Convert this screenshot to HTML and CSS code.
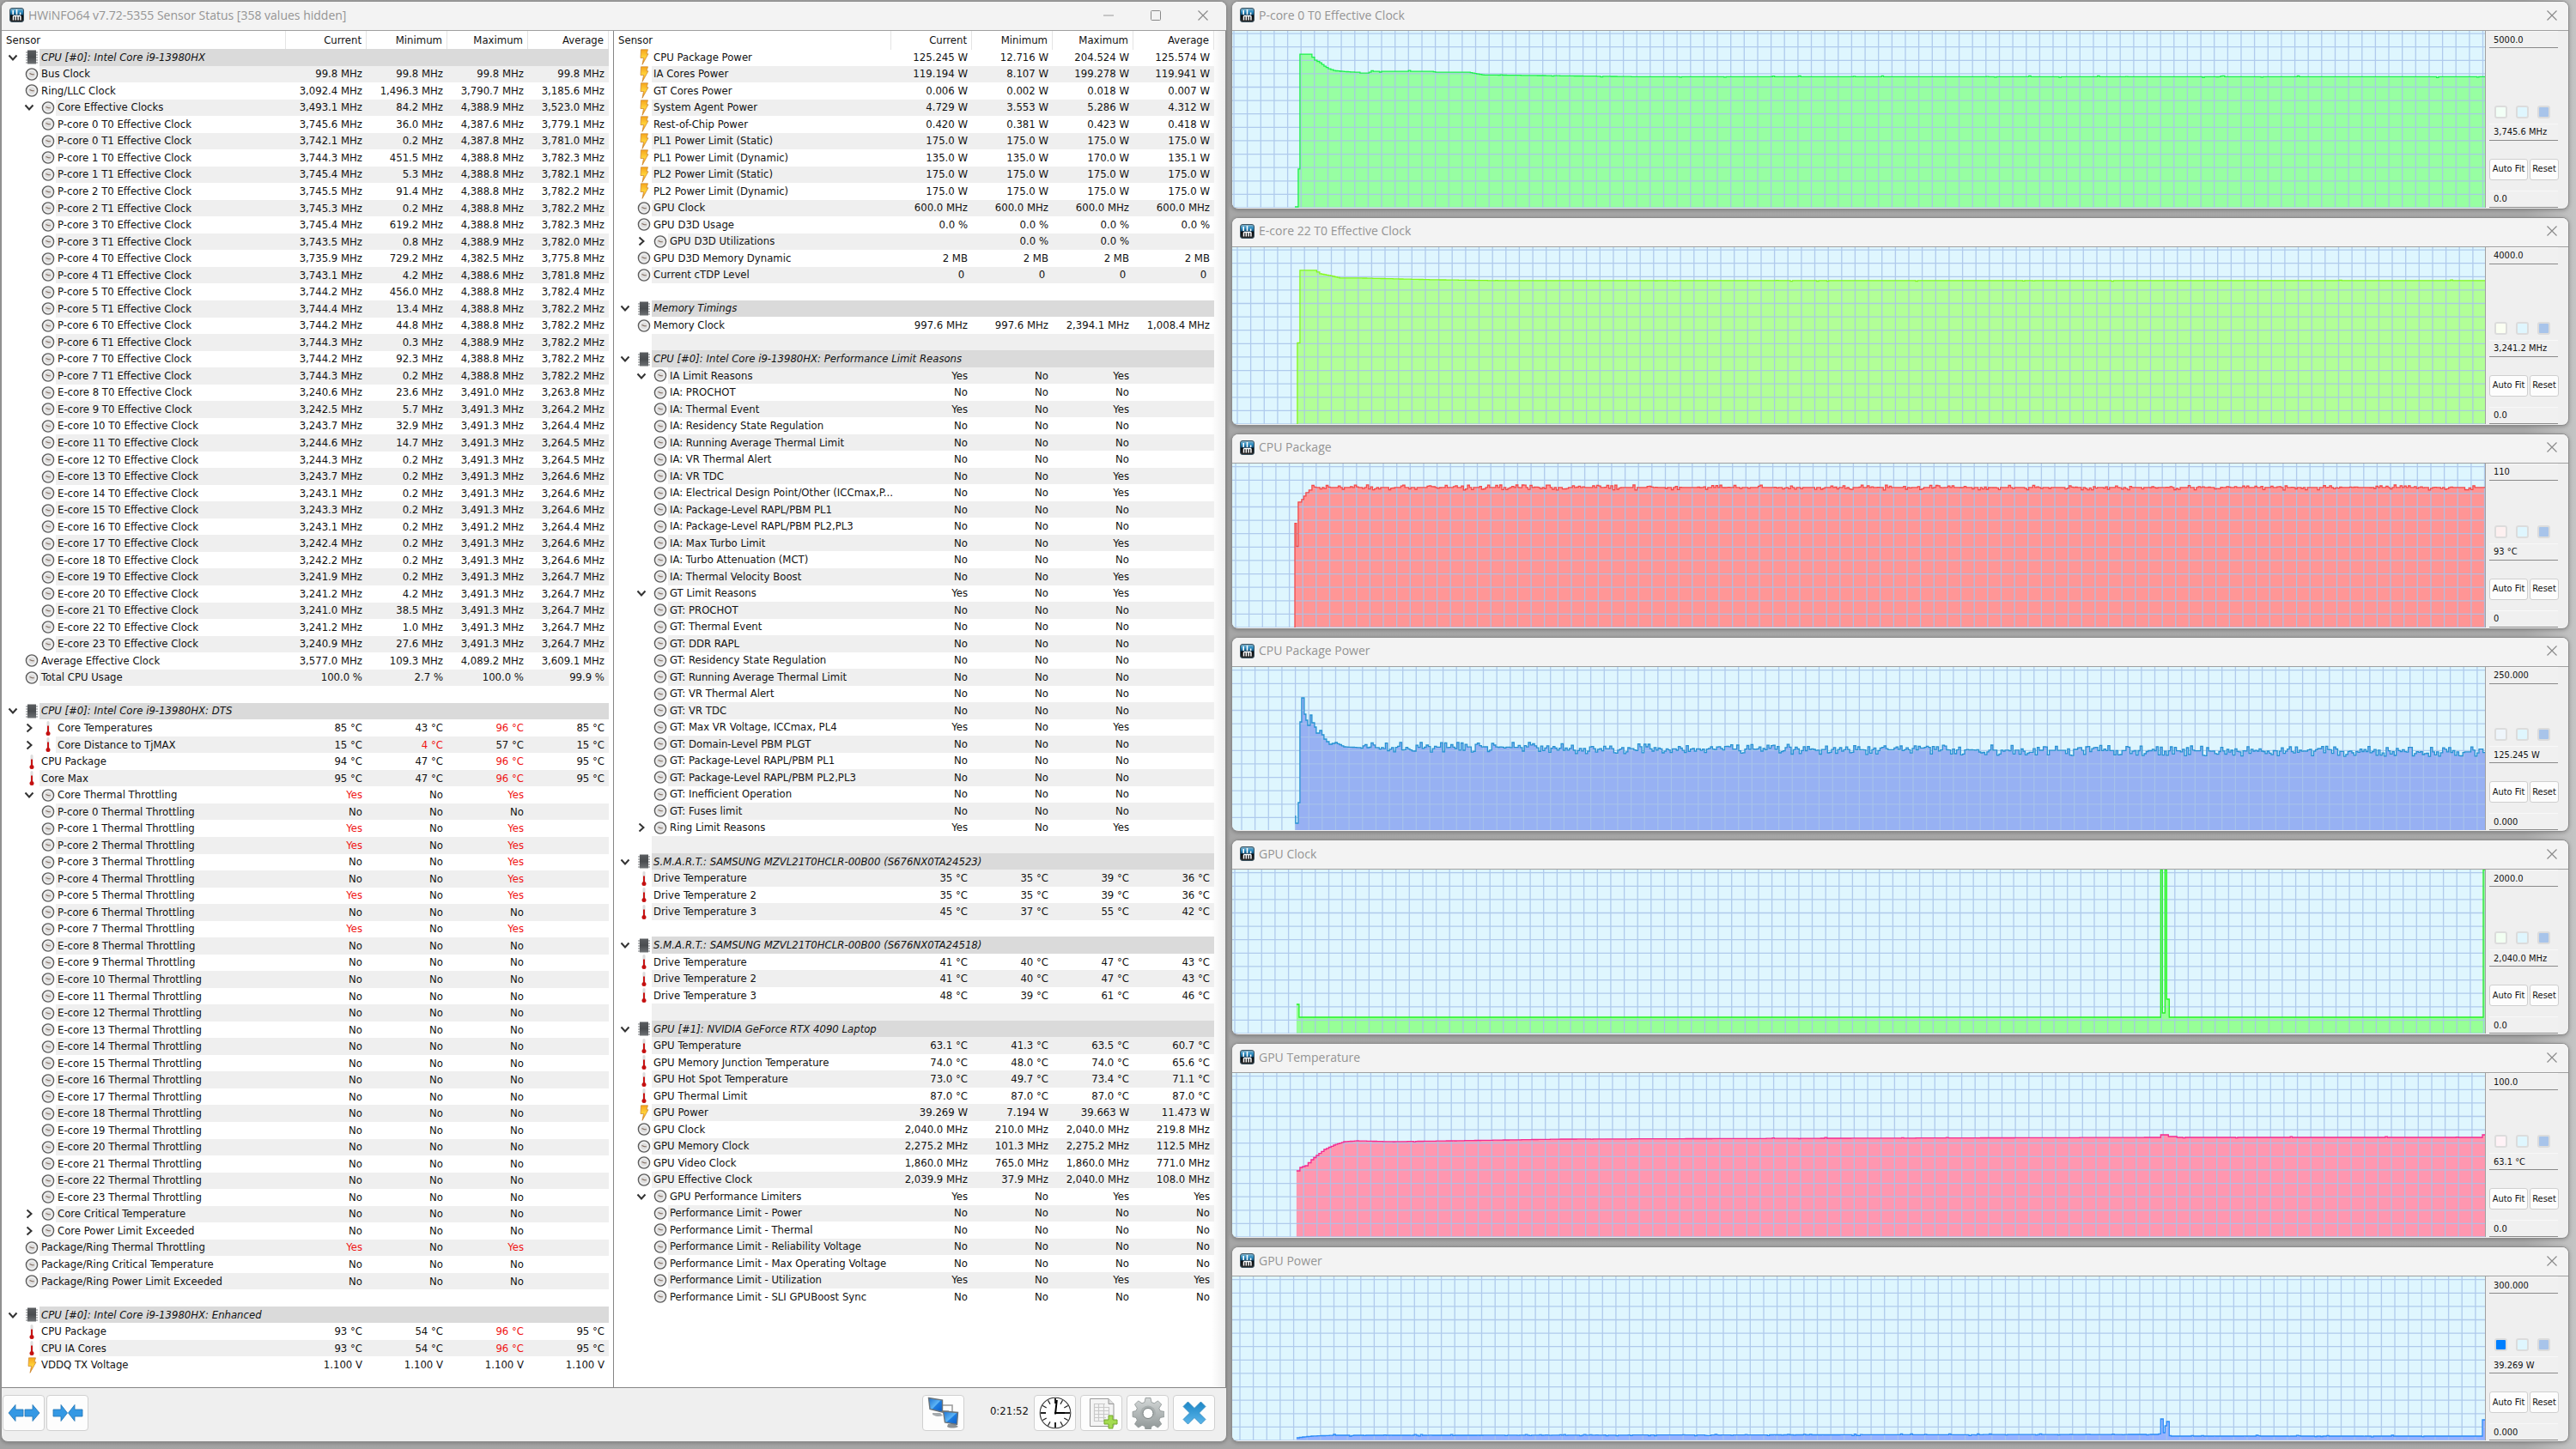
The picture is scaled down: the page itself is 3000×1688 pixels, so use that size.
FILE: index.html
```html
<!DOCTYPE html>
<html lang="en">
<head>
<meta charset="utf-8">
<title>HWiNFO64 Sensor Status</title>
<link rel="stylesheet" href="styles.css">
</head>
<body>
<svg class="sprite" aria-hidden="true">
  <defs>
    <linearGradient id="g-logo" x1="0" y1="0" x2="0" y2="1"><stop offset="0" stop-color="#8fb4c6"/><stop offset=".25" stop-color="#2f8fc4"/><stop offset=".48" stop-color="#0b4f7c"/><stop offset=".52" stop-color="#06090c"/><stop offset="1" stop-color="#2a2a2a"/></linearGradient>
    <linearGradient id="g-chip" x1="0" y1="0" x2="0" y2="1"><stop offset="0" stop-color="#5a5d60"/><stop offset=".5" stop-color="#4a4d50"/><stop offset="1" stop-color="#6e7174"/></linearGradient>
    <linearGradient id="g-bolt" x1="0" y1="0" x2="0" y2="1"><stop offset="0" stop-color="#f7a51c"/><stop offset=".5" stop-color="#ffd23a"/><stop offset="1" stop-color="#ef7d10"/></linearGradient>
    <linearGradient id="g-screen" x1="0" y1="0" x2="1" y2="1"><stop offset="0" stop-color="#1a6fd0"/><stop offset=".5" stop-color="#5db4f5"/><stop offset=".55" stop-color="#1f7de0"/><stop offset="1" stop-color="#0d5cc4"/></linearGradient>
    <linearGradient id="g-gear" x1="0" y1="0" x2="0" y2="1"><stop offset="0" stop-color="#d4d8d8"/><stop offset="1" stop-color="#8f9696"/></linearGradient>
    <linearGradient id="g-x" x1="0" y1="0" x2="0" y2="1"><stop offset="0" stop-color="#1c86c6"/><stop offset="1" stop-color="#5bb5ea"/></linearGradient>
  </defs>
  <symbol id="i-logo" viewBox="0 0 17 17"><rect x=".5" y=".5" width="16" height="16" rx="2.5" fill="url(#g-logo)" stroke="#3b5361"/><path d="M4.2 3v5M8.500 2v6M12.600 5.500V8" stroke="#fff" stroke-width="1.600"/><path d="M4.500 9.500h8.600M4.500 9.500v5M7.300 9.500v5M10.100 9.500v5M12.900 9.500v5" stroke="#fff" stroke-width="1.500" fill="none"/></symbol>
  <symbol id="i-chip" viewBox="0 0 16 18"><path d="M1 3.500h14M1 6.500h14M1 9.500h14M1 12.500h14M1 15.500h14" stroke="#a3a5a8" stroke-width="1.300"/><rect x="3" y="1" width="10" height="16" fill="url(#g-chip)"/></symbol>
  <symbol id="i-clock" viewBox="0 0 16 16"><circle cx="8" cy="8" r="6.600" fill="#e9e9e9" stroke="#5c5c5c" stroke-width="1.400"/><circle cx="8" cy="8" r="4.600" fill="#dedede" stroke="#f8f8f8" stroke-width=".8"/><path d="M5.500 7l3 1.300h2.300" fill="none" stroke="#7c6658" stroke-width="1.100"/></symbol>
  <symbol id="i-temp" viewBox="0 0 16 18"><path d="M8 2v12" stroke="#dcdcdc" stroke-width="3" stroke-linecap="round"/><path d="M8 6v9" stroke="#c81414" stroke-width="2"/><circle cx="8" cy="15" r="2.500" fill="#c41010"/></symbol>
  <symbol id="i-bolt" viewBox="0 0 16 18"><path d="M4.500 .3H12.500l-1.500 5h2L6 17.800 7.500 10H4z" fill="url(#g-bolt)" stroke="#c9822a" stroke-width=".7"/></symbol>
  <symbol id="i-down" viewBox="0 0 12 12"><path d="M1.500 3.500L6 8.500l4.500-5" fill="none" stroke="#333" stroke-width="2"/></symbol>
  <symbol id="i-right" viewBox="0 0 12 12"><path d="M3.500 1.500l5 4.500-5 4.500" fill="none" stroke="#333" stroke-width="2"/></symbol>
  <symbol id="i-min" viewBox="0 0 14 14"><path d="M1 7h12" stroke="#999"/></symbol>
  <symbol id="i-max" viewBox="0 0 14 14"><rect x="1.500" y="1.500" width="11" height="11" rx="1" fill="none" stroke="#888"/></symbol>
  <symbol id="i-close" viewBox="0 0 14 14"><path d="M1.500 1.500l11 11M12.500 1.500l-11 11" stroke="#888" stroke-width="1.100"/></symbol>
  <symbol id="i-expand" viewBox="0 0 38 22"><path d="M1 11L9 1.500V7h9v8H9v5.500z" fill="#3498e4" stroke="#2274b4" stroke-width=".8"/><path d="M37 11L29 1.500V7h-9v8h9v5.500z" fill="#3498e4" stroke="#2274b4" stroke-width=".8"/></symbol>
  <symbol id="i-shrink" viewBox="0 0 38 22"><path d="M18.500 11L11 1.500V7H2v8h9v5.500z" fill="#3498e4" stroke="#2274b4" stroke-width=".8"/><path d="M19.500 11L27 1.500V7h9v8h-9v5.500z" fill="#3498e4" stroke="#2274b4" stroke-width=".8"/></symbol>
  <symbol id="i-net" viewBox="0 0 38 38"><path d="M18 10h11v9M13 17h12" fill="none" stroke="#999" stroke-width="1.500"/><path d="M6 19h9l3 3c-4 2-9 1-12-1z" fill="#a5aaad"/><path d="M1.500 1.500l16 2.500v14L3 14.500z" fill="url(#g-screen)" stroke="#6c7479" stroke-width="1.400"/><path d="M24 32h8l4 3c-4 2-10 2-13 0z" fill="#8d9295"/><path d="M18.500 17l17 1.500-1 14-14-2.500z" fill="url(#g-screen)" stroke="#6c7479" stroke-width="1.400"/></symbol>
  <symbol id="i-time" viewBox="0 0 38 38"><circle cx="19" cy="19" r="17.800" fill="#fff" stroke="#333" stroke-width="1.100"/><path d="M19 2v6M19 30v6M2 19h6M30 19h6" stroke="#222" stroke-width="2"/><path d="M10.500 4.300l2.500 4.400M27.500 4.300L25 8.700M4.300 10.500l4.400 2.500M33.700 10.500L29.300 13M4.300 27.500L8.700 25M33.700 27.500L29.300 25M10.500 33.700l2.500-4.400M27.500 33.700L25 29.300" stroke="#222" stroke-width="1.300"/><path d="M19 20.500L20.800 4M18 19h12" fill="none" stroke="#000" stroke-width="2"/></symbol>
  <symbol id="i-log" viewBox="0 0 38 38"><path d="M5.500 2.500H27l6 6v26H5.500z" fill="#f4f4f4" stroke="#999"/><path d="M27 2.500v6h6" fill="#ddd" stroke="#999"/><path d="M10 8.500h13M10 12.500h18M10 16.500h18M10 20.500h18M10 24.500h14M10 28.500h12M10.500 8v21M15.500 8v21M21.500 8v21M27.500 12v10" stroke="#c9c9c9" stroke-width="1.200"/><path d="M27 22h5v5h5v5h-5v5h-5v-5h-5v-5h5z" fill="#a4dc50" stroke="#74a82c"/></symbol>
  <symbol id="i-gear" viewBox="0 0 38 38"><g fill="url(#g-gear)" stroke="#8b9292" stroke-width=".8"><path d="M16 1.500h6l1 5 3.200 1.300 4.300-2.900 4.200 4.200-2.800 4.400 1.200 3 5 1v6l-5 1-1.200 3 2.800 4.400-4.200 4.200-4.400-2.800-3 1.200-1 4h-6l-1-4-3-1.200-4.400 2.800-4.200-4.200 2.800-4.400-1.200-3-4-1v-6l4-1 1.200-3-2.800-4.400 4.200-4.200 4.300 2.900L15 6.500z"/></g><circle cx="19" cy="19.500" r="9" fill="#a8aeae"/><circle cx="19" cy="19.500" r="6" fill="#fff" stroke="#787f7f"/></symbol>
  <symbol id="i-exit" viewBox="0 0 38 38"><path d="M11.500 6L19 13.500 26.500 6 32 11.500 24.500 19 32 26.500 26.500 32 19 24.500 11.500 32 6 26.500 13.500 19 6 11.500z" fill="url(#g-x)" stroke="#2a86bd" stroke-width=".8"/></symbol>
</svg>

<main class="desktop">
  <section class="window sensors">
    <header class="titlebar">
      <svg class="logo"><use href="#i-logo"/></svg>
      <h1 class="title">HWiNFO64 v7.72-5355 Sensor Status [358 values hidden]</h1>
      <button class="caption" aria-label="Minimize"><svg><use href="#i-min"/></svg></button>
      <button class="caption" aria-label="Maximize"><svg><use href="#i-max"/></svg></button>
      <button class="caption" aria-label="Close"><svg><use href="#i-close"/></svg></button>
    </header>
    <div class="panes">
      <table class="grid grid-left" id="left"></table>
      <table class="grid grid-right" id="right"></table>
    </div>
    <footer class="toolbar">
      <div class="column-tools">
        <button class="tool" aria-label="Expand columns"><svg class="arrows"><use href="#i-expand"/></svg></button>
        <button class="tool" aria-label="Shrink columns"><svg class="arrows"><use href="#i-shrink"/></svg></button>
      </div>
      <button class="tool" aria-label="Remote monitoring"><svg><use href="#i-net"/></svg></button>
      <time class="elapsed">0:21:52</time>
      <button class="tool" aria-label="Reset time"><svg><use href="#i-time"/></svg></button>
      <button class="tool" aria-label="Start logging"><svg><use href="#i-log"/></svg></button>
      <button class="tool" aria-label="Settings"><svg><use href="#i-gear"/></svg></button>
      <button class="tool" aria-label="Close sensors"><svg><use href="#i-exit"/></svg></button>
    </footer>
  </section>
  <div class="graphs" id="graphs"></div>
</main>
<script src="app.js"></script>
</body>
</html>
```
FILE: styles.css
```css
* { box-sizing: border-box; }
body {
  margin: 0;
  background: linear-gradient(to right, #a3a3a3, #a9a9a9 98%, #c4c4c4);
  color: #111;
  font: 13px/18px "DejaVu Sans Condensed", "Noto Sans", sans-serif;
}
button, input { font: inherit; color: inherit; margin: 0; padding: 0; border: 0; background: none; }
.sprite { position: absolute; width: 0; height: 0; }

.desktop {
  display: grid;
  grid-template-columns: minmax(0, 1428fr) minmax(0, 1558fr);
  gap: 5px;
  min-height: 100vh;
  padding: 1px 8px 8px 1px;
}
.window {
  display: flex;
  flex-direction: column;
  min-height: 0;
  overflow: hidden;
  border: 1px solid #8c8c8c;
  border-radius: 8px;
  background: #efefef;
  box-shadow: 0 1px 4px rgba(0, 0, 0, .25);
}
.titlebar {
  display: flex;
  align-items: center;
  flex: none;
  height: 34px;
  padding: 0 0 2px 9px;
  background: #f3f3f3;
  border-bottom: 1px solid #a0a0a0;
}
.logo { width: 17px; height: 17px; margin-right: 5px; }
.title { flex: 1; margin: 0; font: 14px/20px "Open Sans", "Noto Sans", sans-serif; color: #949494; }
.caption { display: grid; place-items: center; width: 55px; height: 30px; }
.caption svg { width: 14px; height: 14px; }
.graph .caption { width: 38px; }

.panes { display: grid; grid-template-columns: 1fr 1fr; flex: 1; min-height: 0; }
.grid {
  display: flex;
  flex-direction: column;
  min-width: 0;
  background: #fff;
  border-right: 1px solid #868686;
  border-bottom: 1px solid #868686;
}
.grid-right { background: linear-gradient(to left, #eeeeee, #fff 16px); }
.grid thead { flex: none; }
.grid tbody { display: flex; flex-direction: column; flex: 1; }
.grid tr {
  display: grid;
  grid-template-columns: minmax(0, 1fr) repeat(4, 94px);
  flex: 1 1 18px;
}
.grid-left tr { padding-right: 5px; }
.grid-right tr { padding-right: 13px; }
.grid thead tr { height: 21px; }
.grid-left tbody::after { content: ""; flex: .83 1 15px; }
.grid-right tbody::after { content: ""; flex: 4.87 1 88px; }
.grid thead th { padding: 0 5px; border-right: 1px solid #e4e4e4; font-weight: 400; line-height: 22px; text-align: right; }
.grid thead th:first-child { text-align: left; }
.grid td { display: flex; align-items: center; justify-content: flex-end; min-width: 0; padding: 0 5px 0 0; white-space: pre; }
.grid tbody th { display: flex; align-items: stretch; min-width: 0; padding: 0; font-weight: 400; text-align: left; white-space: nowrap; }
.grid .group th { grid-column: 1 / -1; font-style: italic; }
.grid tbody .level-2 th { padding-left: 19px; }
.twist { display: grid; place-items: center; flex: none; width: 26px; }
.twist svg { width: 12px; height: 12px; }
.kind { align-self: center; flex: none; width: 16px; height: 19px; margin: -1px 1px; }
.label { display: flex; align-items: center; flex: 1; padding-left: 2px; }
.odd td, .odd .label { background: #efefef; }
.group .label { background: #dadada; }
.grid .alert { color: #f01414; }

.toolbar { display: flex; align-items: center; gap: 5px; flex: none; height: 62px; padding: 0 13px 4px 1px; }
.column-tools { display: flex; gap: 2px; margin-right: auto; }
.tool { display: grid; place-items: center; width: 49px; height: 42px; border: 1px solid #d0d0d0; border-radius: 4px; background: #fdfdfd; }
.tool svg { width: 38px; height: 38px; }
.tool .arrows { height: 22px; }
.elapsed { width: 71px; padding-right: 1px; line-height: 20px; margin-bottom: 4px; text-align: right; }

.graphs { display: flex; flex-direction: column; gap: 9px; min-width: 0; }
.graph { flex: 15 1 0; }
.graph.tall { flex-grow: 16; }
.plot-row { display: flex; flex: 1; min-height: 0; padding-bottom: 1px; }
.plot { flex: 1; min-width: 0; min-height: 170px; position: relative; background: #dff6fe; border-right: 1px solid #a0a0a0; }
.plot svg { position: absolute; inset: 0; width: 100%; height: 100%; }
.side { display: flex; flex-direction: column; flex: none; width: 96px; padding-left: 4px; font-size: 11px; line-height: 18px; }
.field { flex: none; width: 80px; height: 20px; padding-left: 5px; background: #f0f0f0; border-top: 1px solid #f8f8f8; border-bottom: 1px solid #8a8a8a; }
.swatches { display: flex; gap: 10px; margin-top: auto; padding-left: 6px; }
.swatch { width: 15px; height: 15px; border: 2px solid #dcdcdc; border-radius: 3px; }
.swatches + .field { margin-top: 6px; }
.actions { display: flex; gap: 2px; margin: 21px 0 12px; }
.action { height: 25px; border: 1px solid #cfcfcf; border-radius: 3px; background: #fdfdfd; white-space: nowrap; }
.fit { width: 45px; }
.reset { width: 34px; }
```
FILE: app.js
```js
// Row format: "kind|name|current|minimum|maximum|average".
// kind: # group, c clock, t temperature, b power, upper case = nested;
// a trailing v or > adds an open or closed twist. "!" marks an alert value.
const range = (a, b) => Array.from({ length: b - a + 1 }, (_, i) => a + i);

const clocks = [
  ["3,745.6", "36.0", "4,387.6", "3,779.1"], ["3,742.1", "0.2", "4,387.8", "3,781.0"],
  ["3,744.3", "451.5", "4,388.8", "3,782.3"], ["3,745.4", "5.3", "4,388.8", "3,782.1"],
  ["3,745.5", "91.4", "4,388.8", "3,782.2"], ["3,745.3", "0.2", "4,388.8", "3,782.2"],
  ["3,745.4", "619.2", "4,388.8", "3,782.3"], ["3,743.5", "0.8", "4,388.9", "3,782.0"],
  ["3,735.9", "729.2", "4,382.5", "3,775.8"], ["3,743.1", "4.2", "4,388.6", "3,781.8"],
  ["3,744.2", "456.0", "4,388.8", "3,782.4"], ["3,744.4", "13.4", "4,388.8", "3,782.2"],
  ["3,744.2", "44.8", "4,388.8", "3,782.2"], ["3,744.3", "0.3", "4,388.9", "3,782.2"],
  ["3,744.2", "92.3", "4,388.8", "3,782.2"], ["3,744.3", "0.2", "4,388.8", "3,782.2"],
  ["3,240.6", "23.6", "3,491.0", "3,263.8"], ["3,242.5", "5.7", "3,491.3", "3,264.2"],
  ["3,243.7", "32.9", "3,491.3", "3,264.4"], ["3,244.6", "14.7", "3,491.3", "3,264.5"],
  ["3,244.3", "0.2", "3,491.3", "3,264.5"], ["3,243.7", "0.2", "3,491.3", "3,264.6"],
  ["3,243.1", "0.2", "3,491.3", "3,264.6"], ["3,243.3", "0.2", "3,491.3", "3,264.6"],
  ["3,243.1", "0.2", "3,491.2", "3,264.4"], ["3,242.4", "0.2", "3,491.3", "3,264.6"],
  ["3,242.2", "0.2", "3,491.3", "3,264.6"], ["3,241.9", "0.2", "3,491.3", "3,264.7"],
  ["3,241.2", "4.2", "3,491.3", "3,264.7"], ["3,241.0", "38.5", "3,491.3", "3,264.7"],
  ["3,241.2", "1.0", "3,491.3", "3,264.7"], ["3,240.9", "27.6", "3,491.3", "3,264.7"]
].map((v, i) => {
  const name = i < 16 ? `P-core ${i >> 1} T${i & 1}` : `E-core ${i - 8} T0`;
  return `C|${name} Effective Clock|${v.map(x => x + " MHz").join("|")}`;
});

const throttled = { 1: "!Yes|No|!Yes", 2: "!Yes|No|!Yes", 3: "No|No|!Yes", 4: "No|No|!Yes", 5: "!Yes|No|!Yes", 7: "!Yes|No|!Yes" };
const throttling = range(0, 23).map(i =>
  `C|${i < 8 ? "P" : "E"}-core ${i} Thermal Throttling|${throttled[i] || "No|No|No"}|`);

const left = [
  "#v|CPU [#0]: Intel Core i9-13980HX",
  "c|Bus Clock|99.8 MHz|99.8 MHz|99.8 MHz|99.8 MHz",
  "c|Ring/LLC Clock|3,092.4 MHz|1,496.3 MHz|3,790.7 MHz|3,185.6 MHz",
  "Cv|Core Effective Clocks|3,493.1 MHz|84.2 MHz|4,388.9 MHz|3,523.0 MHz",
  ...clocks,
  "c|Average Effective Clock|3,577.0 MHz|109.3 MHz|4,089.2 MHz|3,609.1 MHz",
  "c|Total CPU Usage|100.0 %|2.7 %|100.0 %|99.9 %",
  "",
  "#v|CPU [#0]: Intel Core i9-13980HX: DTS",
  "T>|Core Temperatures|85 °C|43 °C|!96 °C|85 °C",
  "T>|Core Distance to TjMAX|15 °C|!4 °C|57 °C|15 °C",
  "t|CPU Package|94 °C|47 °C|!96 °C|95 °C",
  "t|Core Max|95 °C|47 °C|!96 °C|95 °C",
  "Cv|Core Thermal Throttling|!Yes|No|!Yes|",
  ...throttling,
  "C>|Core Critical Temperature|No|No|No|",
  "C>|Core Power Limit Exceeded|No|No|No|",
  "c|Package/Ring Thermal Throttling|!Yes|No|!Yes|",
  "c|Package/Ring Critical Temperature|No|No|No|",
  "c|Package/Ring Power Limit Exceeded|No|No|No|",
  "",
  "#v|CPU [#0]: Intel Core i9-13980HX: Enhanced",
  "t|CPU Package|93 °C|54 °C|!96 °C|95 °C",
  "t|CPU IA Cores|93 °C|54 °C|!96 °C|95 °C",
  "b|VDDQ TX Voltage|1.100 V|1.100 V|1.100 V|1.100 V"
];

const right = [
  "b|CPU Package Power|125.245 W|12.716 W|204.524 W|125.574 W",
  "b|IA Cores Power|119.194 W|8.107 W|199.278 W|119.941 W",
  "b|GT Cores Power|0.006 W|0.002 W|0.018 W|0.007 W",
  "b|System Agent Power|4.729 W|3.553 W|5.286 W|4.312 W",
  "b|Rest-of-Chip Power|0.420 W|0.381 W|0.423 W|0.418 W",
  "b|PL1 Power Limit (Static)|175.0 W|175.0 W|175.0 W|175.0 W",
  "b|PL1 Power Limit (Dynamic)|135.0 W|135.0 W|170.0 W|135.1 W",
  "b|PL2 Power Limit (Static)|175.0 W|175.0 W|175.0 W|175.0 W",
  "b|PL2 Power Limit (Dynamic)|175.0 W|175.0 W|175.0 W|175.0 W",
  "c|GPU Clock|600.0 MHz|600.0 MHz|600.0 MHz|600.0 MHz",
  "c|GPU D3D Usage|0.0 %|0.0 %|0.0 %|0.0 %",
  "C>|GPU D3D Utilizations||0.0 %|0.0 %|",
  "c|GPU D3D Memory Dynamic|2 MB|2 MB|2 MB|2 MB",
  "c|Current cTDP Level|0 |0 |0 |0 ",
  "",
  "#v|Memory Timings",
  "c|Memory Clock|997.6 MHz|997.6 MHz|2,394.1 MHz|1,008.4 MHz",
  "",
  "#v|CPU [#0]: Intel Core i9-13980HX: Performance Limit Reasons",
  "Cv|IA Limit Reasons|Yes|No|Yes|",
  "C|IA: PROCHOT|No|No|No|",
  "C|IA: Thermal Event|Yes|No|Yes|",
  "C|IA: Residency State Regulation|No|No|No|",
  "C|IA: Running Average Thermal Limit|No|No|No|",
  "C|IA: VR Thermal Alert|No|No|No|",
  "C|IA: VR TDC|No|No|Yes|",
  "C|IA: Electrical Design Point/Other (ICCmax,P...|No|No|Yes|",
  "C|IA: Package-Level RAPL/PBM PL1|No|No|No|",
  "C|IA: Package-Level RAPL/PBM PL2,PL3|No|No|No|",
  "C|IA: Max Turbo Limit|No|No|Yes|",
  "C|IA: Turbo Attenuation (MCT)|No|No|No|",
  "C|IA: Thermal Velocity Boost|No|No|Yes|",
  "Cv|GT Limit Reasons|Yes|No|Yes|",
  "C|GT: PROCHOT|No|No|No|",
  "C|GT: Thermal Event|No|No|No|",
  "C|GT: DDR RAPL|No|No|No|",
  "C|GT: Residency State Regulation|No|No|No|",
  "C|GT: Running Average Thermal Limit|No|No|No|",
  "C|GT: VR Thermal Alert|No|No|No|",
  "C|GT: VR TDC|No|No|No|",
  "C|GT: Max VR Voltage, ICCmax, PL4|Yes|No|Yes|",
  "C|GT: Domain-Level PBM PLGT|No|No|No|",
  "C|GT: Package-Level RAPL/PBM PL1|No|No|No|",
  "C|GT: Package-Level RAPL/PBM PL2,PL3|No|No|No|",
  "C|GT: Inefficient Operation|No|No|No|",
  "C|GT: Fuses limit|No|No|No|",
  "C>|Ring Limit Reasons|Yes|No|Yes|",
  "",
  "#v|S.M.A.R.T.: SAMSUNG MZVL21T0HCLR-00B00 (S676NX0TA24523)",
  "t|Drive Temperature|35 °C|35 °C|39 °C|36 °C",
  "t|Drive Temperature 2|35 °C|35 °C|39 °C|36 °C",
  "t|Drive Temperature 3|45 °C|37 °C|55 °C|42 °C",
  "",
  "#v|S.M.A.R.T.: SAMSUNG MZVL21T0HCLR-00B00 (S676NX0TA24518)",
  "t|Drive Temperature|41 °C|40 °C|47 °C|43 °C",
  "t|Drive Temperature 2|41 °C|40 °C|47 °C|43 °C",
  "t|Drive Temperature 3|48 °C|39 °C|61 °C|46 °C",
  "",
  "#v|GPU [#1]: NVIDIA GeForce RTX 4090 Laptop",
  "t|GPU Temperature|63.1 °C|41.3 °C|63.5 °C|60.7 °C",
  "t|GPU Memory Junction Temperature|74.0 °C|48.0 °C|74.0 °C|65.6 °C",
  "t|GPU Hot Spot Temperature|73.0 °C|49.7 °C|73.4 °C|71.1 °C",
  "t|GPU Thermal Limit|87.0 °C|87.0 °C|87.0 °C|87.0 °C",
  "b|GPU Power|39.269 W|7.194 W|39.663 W|11.473 W",
  "c|GPU Clock|2,040.0 MHz|210.0 MHz|2,040.0 MHz|219.8 MHz",
  "c|GPU Memory Clock|2,275.2 MHz|101.3 MHz|2,275.2 MHz|112.5 MHz",
  "c|GPU Video Clock|1,860.0 MHz|765.0 MHz|1,860.0 MHz|771.0 MHz",
  "c|GPU Effective Clock|2,039.9 MHz|37.9 MHz|2,040.0 MHz|108.0 MHz",
  "Cv|GPU Performance Limiters|Yes|No|Yes|Yes",
  "C|Performance Limit - Power|No|No|No|No",
  "C|Performance Limit - Thermal|No|No|No|No",
  "C|Performance Limit - Reliability Voltage|No|No|No|No",
  "C|Performance Limit - Max Operating Voltage|No|No|No|No",
  "C|Performance Limit - Utilization|Yes|No|Yes|Yes",
  "C|Performance Limit - SLI GPUBoost Sync|No|No|No|No"
];

const icons = { "#": "chip", c: "clock", t: "temp", b: "bolt" };

function rowHtml(row, index) {
  const odd = index % 2 ? " odd" : "";
  if (!row) {
    return `<tr class="blank${odd}"><th><span class="twist"></span><span class="kind"></span><span class="label"></span></th><td></td><td></td><td></td><td></td></tr>`;
  }
  const [kind, name, ...values] = row.split("|");
  const group = kind[0] === "#";
  const nested = /[A-Z]/.test(kind[0]);
  const open = kind[1] === "v";
  const twist = kind[1]
    ? `<button class="twist" aria-expanded="${open}" aria-label="${name}"><svg><use href="#i-${open ? "down" : "right"}"/></svg></button>`
    : `<span class="twist"></span>`;
  const icon = `<svg class="kind"><use href="#i-${icons[kind[0].toLowerCase()]}"/></svg>`;
  const cells = values.map(v => v[0] === "!" ? `<td class="alert">${v.slice(1)}</td>` : `<td>${v}</td>`).join("");
  const head = group ? `<th colspan="5" scope="rowgroup">` : `<th scope="row">`;
  return `<tr class="${group ? "group" : nested ? "level-2" : "level-1"}${group ? "" : odd}">${head}${twist}${icon}<span class="label">${name}</span></th>${cells}</tr>`;
}

function fillTable(id, rows) {
  const head = ["Sensor", "Current", "Minimum", "Maximum", "Average"].map(h => `<th scope="col">${h}</th>`).join("");
  document.getElementById(id).innerHTML = `<thead><tr>${head}</tr></thead><tbody>${rows.map(rowHtml).join("")}</tbody>`;
}
fillTable("left", left);
fillTable("right", right);

// History curves: [time, height] knots on a 1460-unit time axis and a `base`-unit value axis.
const charts = [
  { title: "P-core 0 T0 Effective Clock", max: "5000.0", now: "3,745.6 MHz", min: "0.0", tall: true,
    line: "#1cf04c", fill: "#97ffa3", swatch: "#f2fff6", phase: 2, base: 205, noise: 1, busy: .04,
    knots: [[73,1],[77,1],[77,45],[79,45],[79,178],[90,178],[96,171],[102,168],[107,164],[112,161],[118,159],[128,158],[145,157],[149,156],[157,156],[162,158],[232,158],[237,157],[275,157],[285,155],[291,154],[382,153],[465,152],[1460,152]] },
  { title: "E-core 22 T0 Effective Clock", max: "4000.0", now: "3,241.2 MHz", min: "0.0", tall: true,
    line: "#84f81c", fill: "#b2ff97", swatch: "#fbfff2", phase: 6, base: 207, noise: 1, busy: .04,
    knots: [[76,0],[76,95],[79,95],[79,180],[95,180],[102,176],[112,174],[125,171],[145,171],[232,169],[300,168],[1460,168]] },
  { title: "CPU Package", max: "110", now: "93 °C", min: "0",
    line: "#f24a4a", fill: "#ff9696", swatch: "#fdf0f0", phase: 4, base: 192, noise: 3, busy: .45,
    knots: [[73,0],[73,122],[75,122],[75,95],[77,95],[77,147],[81,150],[86,158],[93,164],[1460,164]] },
  { title: "CPU Package Power", max: "250.000", now: "125.245 W", min: "0.000",
    line: "#2592d2", fill: "#97b1f3", swatch: "#eef5fb", phase: 11, base: 191, noise: 6, busy: .75,
    knots: [[73,17],[74,17],[74,9],[77,9],[77,33],[79,33],[79,127],[81,127],[81,155],[84,155],[84,136],[86,136],[86,129],[88,123],[91,123],[91,135],[93,135],[93,126],[96,121],[98,114],[102,117],[107,107],[113,101],[120,103],[130,98],[150,97],[300,98],[400,96],[1460,92]] },
  { title: "GPU Clock", max: "2000.0", now: "2,040.0 MHz", min: "0.0",
    line: "#24f524", fill: "#97ff97", swatch: "#f2fff2", phase: 3, base: 191, noise: 0, busy: 0,
    knots: [[75,34],[78,34],[78,19],[1082,19],[1082,191],[1084,191],[1084,24],[1087,24],[1087,191],[1089,191],[1089,40],[1092,40],[1092,19],[1458,19],[1458,191],[1460,191]] },
  { title: "GPU Temperature", max: "100.0", now: "63.1 °C", min: "0.0",
    line: "#f52a90", fill: "#ff97b0", swatch: "#fff2f6", phase: 5, base: 191, noise: 1, busy: .04,
    knots: [[75,77],[79,77],[79,81],[85,83],[92,90],[98,95],[107,102],[118,107],[130,111],[145,112],[185,111],[252,112],[318,113],[385,114],[700,115],[1082,116],[1082,119],[1090,119],[1091,117],[1100,117],[1101,116],[1457,116],[1457,119],[1460,119]] },
  { title: "GPU Power", max: "300.000", now: "39.269 W", min: "0.000",
    line: "#2a8cf8", fill: "#97b2ff", swatch: "#007fff", phase: 9, base: 191, noise: 1, busy: .2,
    knots: [[75,3],[82,4],[92,5],[118,6],[250,6],[1082,7],[1082,25],[1085,25],[1085,9],[1087,9],[1087,17],[1089,17],[1089,22],[1092,22],[1092,5],[1457,5],[1457,24],[1460,24]] }
];

document.getElementById("graphs").innerHTML = charts.map(c => `
  <section class="window graph${c.tall ? " tall" : ""}">
    <header class="titlebar"><svg class="logo"><use href="#i-logo"/></svg><h2 class="title">${c.title}</h2>
      <button class="caption" aria-label="Close"><svg><use href="#i-close"/></svg></button></header>
    <div class="plot-row">
      <div class="plot"></div>
      <div class="side">
        <input class="field" aria-label="Scale maximum" value="${c.max}">
        <div class="swatches">
          <button class="swatch" aria-label="Line color" style="background:${c.swatch}"></button>
          <button class="swatch" aria-label="Background color" style="background:#dff6fe"></button>
          <button class="swatch" aria-label="Grid color" style="background:#a8c4ea"></button>
        </div>
        <input class="field" aria-label="Current value" readonly value="${c.now}">
        <div class="actions"><button class="action fit">Auto Fit</button><button class="action reset">Reset</button></div>
        <input class="field" aria-label="Scale minimum" value="${c.min}">
      </div>
    </div>
  </section>`).join("");

function random(seed) {
  return () => (seed = (seed * 16807) % 2147483647) / 2147483647;
}

function drawChart(box, c, seed) {
  const w = box.clientWidth, h = box.clientHeight;
  const sx = w / 1460, sy = h / c.base;
  const rnd = random(seed);
  const pts = [];
  for (let i = 0; i + 1 < c.knots.length; i++) {
    const [x0, v0] = c.knots[i], [x1, v1] = c.knots[i + 1];
    const n = Math.max(1, Math.floor((x1 - x0) / 2.35));
    for (let k = 0; k < n; k++) {
      let v = v0 + (v1 - v0) * k / n;
      if (n > 12 && rnd() < c.busy) v += (rnd() - .5) * 2 * c.noise;
      pts.push([x0 + (x1 - x0) * k / n, v]);
    }
  }
  pts.push(c.knots[c.knots.length - 1]);
  const X = x => (x * sx).toFixed(1), Y = v => (h - v * sy).toFixed(1);
  let d = `M${X(pts[0][0])} ${Y(pts[0][1])}`;
  for (const [x, v] of pts.slice(1)) d += `H${X(x)}V${Y(v)}`;
  let grid = "";
  for (let x = c.phase; x < w; x += 15.64) grid += `M${x.toFixed(1)} 0V${h}`;
  for (let y = h; y > 0; y -= 15.61) grid += `M0 ${y.toFixed(1)}H${w}`;
  box.innerHTML = `<svg role="img" aria-label="${c.title}"><path d="${d}V${h}H${X(pts[0][0])}Z" fill="${c.fill}"/><path d="${grid}" stroke="#a8c4ea" stroke-width="1.3" opacity=".85"/><path d="${d}" fill="none" stroke="${c.line}" stroke-width="1.3"/></svg>`;
}

function drawAll() {
  document.querySelectorAll(".plot").forEach((box, i) => drawChart(box, charts[i], 4211 + i * 977));
}
drawAll();
addEventListener("resize", drawAll);
```
